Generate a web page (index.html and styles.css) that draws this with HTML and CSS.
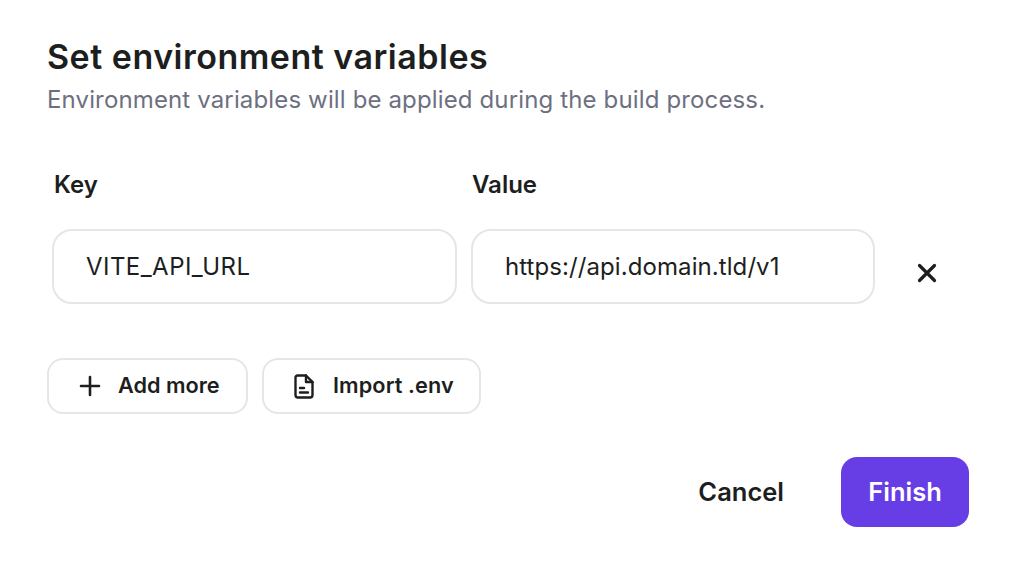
FILE: index.html
```html
<!DOCTYPE html>
<html lang="en">
<head>
    <meta charset="UTF-8">
    <meta name="viewport" content="width=device-width, initial-scale=1.0">
    <title>Set environment variables</title>
    <link rel="stylesheet" href="styles.css">
</head>
<body>
    <div class="dialog">
        <h1>Set environment variables</h1>
        <p class="subtitle">Environment variables will be applied during the build process.</p>

        <div class="fields">
            <div class="field">
                <label class="field-label">Key</label>
                <div class="input input-key">VITE_API_URL</div>
            </div>
            <div class="field field-value">
                <label class="field-label">Value</label>
                <div class="input input-value">https://api.domain.tld/v1</div>
            </div>
            <svg class="remove-icon" viewBox="0 0 24 24" width="24" height="24" fill="none" stroke="#1d1e20" stroke-width="3.2" stroke-linecap="round">
                <path d="M4.500 4.500L19.500 19.500M19.500 4.500L4.500 19.500"/>
            </svg>
        </div>

        <div class="actions">
            <button class="btn btn-add">
                <svg viewBox="0 0 24 24" width="24" height="24" fill="none" stroke="#1d1e20" stroke-width="2.6" stroke-linecap="round">
                    <path d="M12 3V21M3 12H21"/>
                </svg>
                Add more
            </button>
            <button class="btn btn-import">
                <svg viewBox="0 0 20 25" width="20" height="25" fill="none" stroke="#1d1e20" stroke-width="2.4" stroke-linecap="round" stroke-linejoin="round">
                    <path d="M3.500 1.500H12L18.500 8V21C18.500 22.400 17.400 23.500 16 23.500H4C2.600 23.500 1.500 22.400 1.500 21V3.500C1.500 2.400 2.400 1.500 3.500 1.500Z"/>
                    <path d="M12 1.500V8H18.500"/>
                    <path d="M6 14H10M6 18.500H14"/>
                </svg>
                Import .env
            </button>
        </div>

        <div class="footer">
            <button class="cancel">Cancel</button>
            <button class="finish">Finish</button>
        </div>
    </div>
</body>
</html>
```

FILE: styles.css
```css
body {
    margin: 0;
    background-color: #fff;
    color: #1d1e20;
    font-family: Inter, "Liberation Sans", sans-serif;
}

.dialog {
    padding: 36px 55px 0 47px;
}

h1 {
    margin: 0;
    font-size: 34px;
    line-height: 42px;
    font-weight: 600;
    letter-spacing: 0.5px;
}

.subtitle {
    margin: 5px 0 0;
    font-size: 24px;
    line-height: 34px;
    color: #6d7081;
    letter-spacing: 0.14px;
}

.fields {
    display: flex;
    margin-top: 52px;
    padding-left: 5px;
}

.field {
    display: flex;
    flex-direction: column;
    margin-right: 14px;
}

.field-label {
    padding-left: 2px;
    font-size: 24px;
    line-height: 32px;
    font-weight: 600;
}

.field-value .field-label {
    padding-left: 1px;
}

.input {
    box-sizing: border-box;
    height: 75px;
    margin-top: 28px;
    border: 2px solid #e6e6e6;
    border-radius: 20px;
    font-size: 24px;
    line-height: 71px;
}

.input-key {
    width: 405px;
    padding-left: 32px;
    letter-spacing: 0.45px;
}

.input-value {
    width: 404px;
    padding-left: 32px;
    letter-spacing: 0.08px;
}

.remove-icon {
    margin: 92px 0 0 26px;
}

.actions {
    display: flex;
    gap: 14px;
    margin-top: 54px;
}

.btn {
    box-sizing: border-box;
    display: flex;
    align-items: center;
    height: 56px;
    padding-bottom: 3px;
    border: 2px solid #e6e6e6;
    border-radius: 16px;
    background-color: #fff;
    color: #1d1e20;
    font-family: inherit;
    font-size: 21.7px;
    font-weight: 600;
    white-space: nowrap;
}

.btn svg {
    position: relative;
    top: 1px;
}

.btn-add {
    width: 201px;
    gap: 16px;
    padding-left: 29px;
}

.btn-import {
    width: 219px;
    gap: 19px;
    padding-left: 30px;
    letter-spacing: 0.1px;
}

.footer {
    display: flex;
    justify-content: flex-end;
    align-items: center;
    gap: 57px;
    margin-top: 43px;
}

.cancel {
    padding: 0 0 2px;
    border: 0;
    background: none;
    color: #1d1e20;
    font-family: inherit;
    font-size: 25.5px;
    font-weight: 600;
}

.finish {
    width: 128px;
    height: 70px;
    padding-bottom: 2px;
    border: 0;
    border-radius: 16px;
    background-color: #673de6;
    color: #fff;
    font-family: inherit;
    font-size: 25.5px;
    font-weight: 600;
}
```
